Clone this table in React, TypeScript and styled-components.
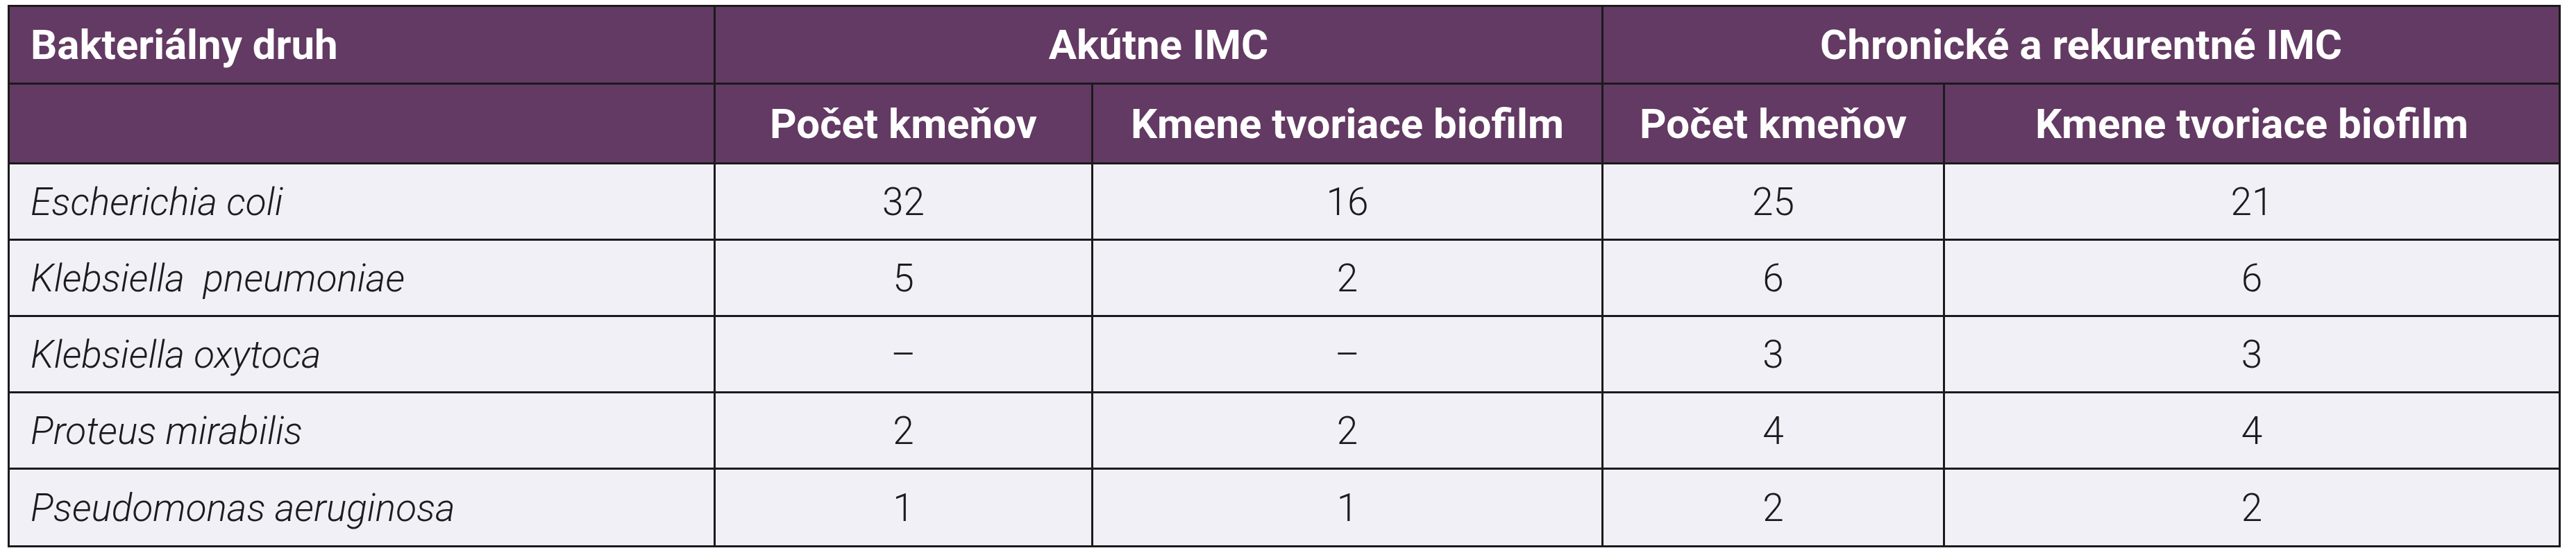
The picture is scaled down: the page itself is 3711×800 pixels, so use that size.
import React from "react";
import styled, { createGlobalStyle } from "styled-components";

const GlobalStyle = createGlobalStyle`
  body {
    margin: 0;
    background: #ffffff;
    font-family: Roboto, "Liberation Sans", sans-serif;
  }
`;

// the dark grid background shows through the gaps as the table rules
const Table = styled.div`
  display: grid;
  grid-template-columns: 1014px 541px 732px 489px 884px;
  grid-template-rows: 109px 112px 107px 107px 107px 107px 109px;
  gap: 3px;
  padding: 3px;
  width: max-content;
  margin: 7px 0 0 11px;
  background: #1b1a1c;
`;

const HeadCell = styled.div<{ $span?: number; $left?: boolean }>`
  grid-column: span ${(p) => p.$span ?? 1};
  display: flex;
  align-items: center;
  justify-content: ${(p) => (p.$left ? "flex-start" : "center")};
  padding: 0 30px;
  background: #633a63;
  color: #ffffff;
  font-size: 60px;
  font-weight: 700;
  white-space: nowrap;
`;

const Cell = styled.div<{ $species?: boolean }>`
  display: flex;
  align-items: center;
  justify-content: ${(p) => (p.$species ? "flex-start" : "center")};
  padding: 0 30px;
  background: #f0f0f6;
  color: #1c1c1e;
  font-size: 55px;
  font-weight: 300;
  font-style: ${(p) => (p.$species ? "italic" : "normal")};
  white-space: pre;
`;

const rows: [string, string, string, string, string][] = [
  ["Escherichia coli", "32", "16", "25", "21"],
  ["Klebsiella  pneumoniae", "5", "2", "6", "6"],
  ["Klebsiella oxytoca", "–", "–", "3", "3"],
  ["Proteus mirabilis", "2", "2", "4", "4"],
  ["Pseudomonas aeruginosa", "1", "1", "2", "2"],
];

const App = () => (
  <>
    <GlobalStyle />
    <Table>
      <HeadCell $left>Bakteriálny druh</HeadCell>
      <HeadCell $span={2}>Akútne IMC</HeadCell>
      <HeadCell $span={2}>Chronické a rekurentné IMC</HeadCell>

      <HeadCell />
      <HeadCell>Počet kmeňov</HeadCell>
      <HeadCell>Kmene tvoriace biofilm</HeadCell>
      <HeadCell>Počet kmeňov</HeadCell>
      <HeadCell>Kmene tvoriace biofilm</HeadCell>

      {rows.map(([name, ...values]) => (
        <React.Fragment key={name}>
          <Cell $species>{name}</Cell>
          {values.map((v, i) => (
            <Cell key={i}>{v}</Cell>
          ))}
        </React.Fragment>
      ))}
    </Table>
  </>
);

export default App;
